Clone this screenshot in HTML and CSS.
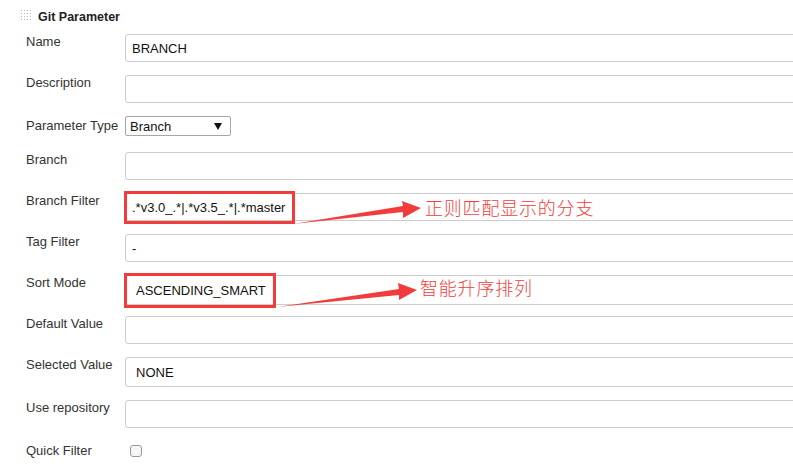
FILE: index.html
```html
<!DOCTYPE html>
<html>
<head>
<meta charset="utf-8">
<link rel="stylesheet" href="styles.css">
</head>
<body>
<div class="page">
  <div class="head">
    <span class="handle"></span>
    <span class="title">Git Parameter</span>
  </div>
  <div class="form">
    <div class="row"><div class="label">Name</div><input class="field" type="text" value="BRANCH" readonly></div>
    <div class="row"><div class="label">Description</div><input class="field" type="text" value="" readonly></div>
    <div class="row row-select"><div class="label label-select">Parameter Type</div><div class="select"><span>Branch</span><span class="caret"></span></div></div>
    <div class="row"><div class="label">Branch</div><input class="field" type="text" value="" readonly></div>
    <div class="row"><div class="label">Branch Filter</div><input class="field" type="text" value=".*v3.0_.*|.*v3.5_.*|.*master" readonly></div>
    <div class="row"><div class="label">Tag Filter</div><input class="field" type="text" value="-" readonly></div>
    <div class="row"><div class="label">Sort Mode</div><input class="field field-wide" type="text" value="ASCENDING_SMART" readonly></div>
    <div class="row"><div class="label">Default Value</div><input class="field" type="text" value="" readonly></div>
    <div class="row row-tall"><div class="label">Selected Value</div><input class="field field-wide" type="text" value="NONE" readonly></div>
    <div class="row row-tall"><div class="label">Use repository</div><input class="field" type="text" value="" readonly></div>
    <div class="row"><div class="label">Quick Filter</div><span class="check"></span></div>
  </div>

  <div class="mark mark-filter"></div>
  <div class="mark mark-sort"></div>
  <svg class="arrows" width="793" height="466" viewBox="0 0 793 466">
    <polygon points="293,224 403,206 402,201 421,208 403,218 403,212" fill="#f23c3c"/>
    <polygon points="277,307 399,289 398,283 417,290 399,300 399,295" fill="#f23c3c"/>
  </svg>
  <div class="note note-filter">正则匹配显示的分支</div>
  <div class="note note-sort">智能升序排列</div>
</div>
</body>
</html>
```
FILE: styles.css
```css
body {
  margin: 0;
  background: #fff;
  font-family: "Liberation Sans", Arial, sans-serif;
  color: #333;
  overflow: hidden;
}

.page {
  position: relative;
  width: 793px;
  height: 466px;
  overflow: hidden;
}

.head {
  display: flex;
  align-items: flex-start;
  gap: 6px;
  height: 28px;
  padding-left: 20px;
}

.handle {
  width: 12px;
  height: 12px;
  margin-top: 9px;
  background-image: radial-gradient(circle, #b8b8b8 0.8px, transparent 0.9px);
  background-size: 3px 3px;
}

.title {
  font-weight: bold;
  font-size: 12.5px;
  line-height: 14px;
  margin-top: 10px;
  color: #222;
}

.form {
  margin-top: 6px;
  width: 840px;
}

.row {
  display: flex;
  align-items: flex-start;
  height: 41px;
  padding-left: 26px;
}

.row-select { height: 36px; }
.row-tall { height: 43px; }

.label {
  flex: none;
  width: 99px;
  margin-top: -1px;
  font-size: 13px;
  line-height: 17px;
}

.label-select { margin-top: 0; padding-top: 1px; }

.field {
  flex: 1;
  box-sizing: border-box;
  height: 28px;
  margin: 0;
  padding: 0 6px;
  border: 1px solid #cccccc;
  border-radius: 3px;
  font-family: "Liberation Sans", Arial, sans-serif;
  font-size: 13px;
  color: #111;
  background: #fff;
  outline: none;
}

.field-wide {
  height: 30px;
  padding-left: 10px;
}

.select {
  box-sizing: border-box;
  width: 106px;
  height: 20px;
  border: 1px solid #a6a6a6;
  border-radius: 2px;
  display: flex;
  align-items: center;
  justify-content: space-between;
  padding: 0 8px 0 4px;
  font-size: 13px;
  color: #111;
}

.caret {
  width: 0;
  height: 0;
  border-left: 4px solid transparent;
  border-right: 4px solid transparent;
  border-top: 7px solid #111;
}

.check {
  box-sizing: border-box;
  width: 12px;
  height: 12px;
  margin: 2px 0 0 5px;
  border: 1px solid #9a9a9a;
  border-radius: 3px;
  background: #f6f6f6;
}

.mark {
  position: absolute;
  box-sizing: border-box;
  border: 3px solid #f23c3c;
}

.mark-filter { left: 124px; top: 191px; width: 171px; height: 33px; }
.mark-sort { left: 124px; top: 273px; width: 152px; height: 35px; }

.arrows {
  position: absolute;
  left: 0;
  top: 0;
}

.note {
  position: absolute;
  font-family: "Noto Sans CJK SC", sans-serif;
  font-size: 18px;
  font-weight: 300;
  line-height: 20px;
  letter-spacing: 0.8px;
  color: #f23c3c;
}

.note-filter { left: 425px; top: 197px; }
.note-sort { left: 420px; top: 277px; }
```
